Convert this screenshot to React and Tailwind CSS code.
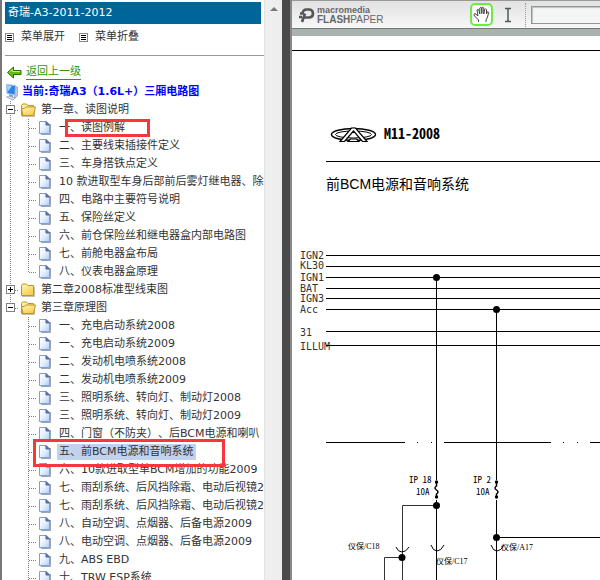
import React from 'react';

const UI = "font-['DejaVu_Sans','Noto_Sans_CJK_SC',sans-serif]";

const chapters = [
  {
    title: '第一章、读图说明',
    open: true,
    pages: [
      { text: '一、读图例解', mark: 'title' },
      { text: '二、主要线束插接件定义' },
      { text: '三、车身搭铁点定义' },
      { text: '10 款进取型车身后部前后雾灯继电器、除霜' },
      { text: '四、电路中主要符号说明' },
      { text: '五、保险丝定义' },
      { text: '六、前仓保险丝和继电器盒内部电路图' },
      { text: '七、前舱电器盒布局' },
      { text: '八、仪表电器盒原理' },
    ],
  },
  { title: '第二章2008标准型线束图', open: false, pages: [] },
  {
    title: '第三章原理图',
    open: true,
    last: true,
    pages: [
      { text: '一、充电启动系统2008' },
      { text: '一、充电启动系统2009' },
      { text: '二、发动机电喷系统2008' },
      { text: '二、发动机电喷系统2009' },
      { text: '三、照明系统、转向灯、制动灯2008' },
      { text: '三、照明系统、转向灯、制动灯2009' },
      { text: '四、门窗（不防夹）、后BCM电源和喇叭' },
      { text: '五、前BCM电源和音响系统', mark: 'row', selected: true },
      { text: '六、10款进取型单BCM增加的功能2009' },
      { text: '七、雨刮系统、后风挡除霜、电动后视镜2008' },
      { text: '七、雨刮系统、后风挡除霜、电动后视镜2009' },
      { text: '八、自动空调、点烟器、后备电源2009' },
      { text: '八、电动空调、点烟器、后备电源2009' },
      { text: '九、ABS EBD' },
      { text: '十、TRW ESP系统', more: true },
    ],
  },
];

function Defs() {
  return (
    <svg className="absolute h-0 w-0" aria-hidden="true">
      <defs>
        <linearGradient id="paper" x1="0" y1="0" x2="1" y2="1">
          <stop offset="0" stopColor="#fff" />
          <stop offset="0.5" stopColor="#e6f1ff" />
          <stop offset="1" stopColor="#a9cdfa" />
        </linearGradient>
        <linearGradient id="folder" x1="0" y1="0" x2="0.6" y2="1">
          <stop offset="0" stopColor="#fff6b5" />
          <stop offset="1" stopColor="#f6ce52" />
        </linearGradient>
      </defs>
    </svg>
  );
}

function ListIcon() {
  return (
    <svg width="9" height="9" viewBox="0 0 9 9" shapeRendering="crispEdges" aria-hidden="true">
      <path d="M.5 .5h8v8h-8z" fill="#fff" stroke="#888" />
      <path d="M2 2.500h5M2 4.500h5M2 6.500h5" stroke="#000" />
    </svg>
  );
}

function PageIcon() {
  return (
    <svg width="18" height="18" viewBox="0 0 18 18" aria-hidden="true">
      <path d="M4 15.500h9.500V5" fill="none" stroke="#9fa3b3" />
      <path d="M2.500 2.500h6.500l3.500 3.500v8.500h-10z" fill="url(#paper)" stroke="#7f9fd6" />
      <path d="M9 2.500v3.500h3.500z" fill="#6a82b8" stroke="#4d6298" />
    </svg>
  );
}

function FolderIcon({ open }) {
  return (
    <svg width="18" height="18" viewBox="0 0 18 18" aria-hidden="true">
      <path d="M3 15.500h12.500V6" fill="none" stroke="#c2bfb4" />
      <path d="M2.500 4.500l1-1.500h4l1.500 1.500h5.500v10h-12z" fill="url(#folder)" stroke="#bf9525" />
      {open && <path d="M2.500 7.500h3l1.500-1.500h9.500l-2 8.500h-10.500z" fill="url(#folder)" stroke="#bf9525" />}
    </svg>
  );
}

function ComputerIcon() {
  return (
    <svg width="16" height="18" viewBox="2 0 16 18" className="shrink-0" aria-hidden="true">
      <path d="M12 3l2.500 1v9l-3 2z" fill="#bfc9d6" stroke="#8c9bb0" strokeWidth=".7" />
      <path d="M3.500 1.500l9 1-.5 9.500-8-1.500z" fill="#2d83e5" stroke="#9fc4ed" />
      <path d="M4 2l5 1-4.500 6z" fill="#9bd3ff" />
      <path d="M6 11.500l4 .8v2l-4-.8z" fill="#8d9db3" />
      <path d="M3.500 14l3-1 6 2-3 2z" fill="#d9e0e9" stroke="#8c9bb0" strokeWidth=".7" />
    </svg>
  );
}

function BackIcon() {
  return (
    <svg width="16" height="14" viewBox="0 0 16 14" aria-hidden="true">
      <path d="M1.500 7.500l6-5.500v3.500h7.500v4H7.500V13z" fill="#62bd12" stroke="#22720b" strokeLinejoin="round" />
      <path d="M3.500 7l3-2.500v2H14" fill="none" stroke="#c8ef72" />
    </svg>
  );
}

function Guide({ x, last }) {
  return (
    <path
      d={`M${x}.5 0V${last ? 9 : 18}M${x}.5 9.500H16`}
      stroke="#808080"
      strokeDasharray="1 1"
      fill="none"
    />
  );
}

function PageRow({ page, trunk, last }) {
  return (
    <li className="flex h-[18px] items-center whitespace-nowrap">
      <svg width="18" height="18" className="shrink-0" shapeRendering="crispEdges" aria-hidden="true">
        {trunk && <path d="M5.500 0V18" stroke="#808080" strokeDasharray="1 1" />}
      </svg>
      <svg width="14" height="18" className="shrink-0" shapeRendering="crispEdges" aria-hidden="true">
        <Guide x={5} last={last} />
      </svg>
      <span className="relative flex shrink-0 items-center">
        <PageIcon />
        {page.mark === 'row' && (
          <span className="pointer-events-none absolute -top-1 -left-1 z-10 h-7 w-48 border-3 border-[#f8363c]" />
        )}
      </span>
      <a
        href="#page"
        className={`relative ml-0.5 px-0.5 leading-4 ${page.selected ? 'bg-[#c1d2ee]' : ''}`}
      >
        {page.text}
        {page.mark === 'title' && (
          <span className="pointer-events-none absolute -top-px left-2 h-[18px] w-[85px] border-3 border-[#f8363c]" />
        )}
      </a>
    </li>
  );
}

function Chapter({ chapter }) {
  return (
    <li>
      <div className="flex h-[18px] items-center whitespace-nowrap">
        <button type="button" className="shrink-0" aria-expanded={chapter.open} aria-label={chapter.title}>
          <svg width="14" height="18" className="block" shapeRendering="crispEdges" aria-hidden="true">
            <Guide x={5} last={chapter.last} />
            <path d="M1.500 4.500h8v8h-8z" fill="#fff" stroke="#808080" />
            <path d={chapter.open ? 'M3 8.500h5' : 'M3 8.500h5M5.500 6v5'} stroke="#000" />
          </svg>
        </button>
        <FolderIcon open={chapter.open} />
        <a href="#chapter" className="ml-0.5 px-0.5 leading-4">{chapter.title}</a>
      </div>
      {chapter.open && (
        <ul>
          {chapter.pages.map((page, i) => (
            <PageRow
              key={page.text}
              page={page}
              trunk={!chapter.last}
              last={i === chapter.pages.length - 1 && !page.more}
            />
          ))}
        </ul>
      )}
    </li>
  );
}

function Sidebar() {
  return (
    <nav className="min-w-0 flex-1 overflow-hidden bg-white text-[11px] text-[#333] [text-spacing-trim:space-all]">
      <h1 className="mt-0.5 mr-[3px] h-[22px] bg-[#006699] pl-[3px] text-[11px] leading-[22px] text-white">
        奇瑞-A3-2011-2012
      </h1>
      <div className="flex h-8 items-center gap-3.5 border-b border-[#999] pb-1">
        <button type="button" className="flex items-center gap-[7px]"><ListIcon />菜单展开</button>
        <button type="button" className="flex items-center gap-[7px]"><ListIcon />菜单折叠</button>
      </div>
      <div className="mt-2 flex h-4 items-center gap-1 pl-px">
        <BackIcon />
        <a href="#up" className="border-b border-[#339900] leading-[14px] text-[#339900]">返回上一级</a>
      </div>
      <div className="mt-[3px] flex h-[18px] items-center gap-px whitespace-nowrap font-bold text-[#0000ff]">
        <ComputerIcon />
        <span>当前:奇瑞A3（1.6L+）三厢电路图</span>
      </div>
      <ul>
        {chapters.map((c) => <Chapter key={c.title} chapter={c} />)}
      </ul>
    </nav>
  );
}

function FlashPaperLogo() {
  return (
    <div className="flex shrink-0 items-center gap-[2px] text-[#666]">
      <svg width="16" height="16" viewBox="0 0 16 16" aria-hidden="true">
        <path
          d="M3 15l3-8.500M5 10.500h5.500q3.500-.5 3.500-4t-3.500-4H7.500Q4 2.500 3.500 6.500H1M0 10h3"
          fill="none"
          stroke="#555"
          strokeWidth="2.600"
        />
      </svg>
      <div className="font-['Liberation_Sans',sans-serif]">
        <div className="text-[9px] leading-[9px] font-bold">macromedia</div>
        <div className="text-[10px] leading-[9px]"><b>FLASH</b>PAPER</div>
      </div>
    </div>
  );
}

function Toolbar() {
  return (
    <header className="flex h-[29px] shrink-0 items-center border-t border-b border-t-[#999] border-b-[#737878] bg-linear-to-b from-[#e2e2e2] to-[#f7f7f7] pl-[7px]">
      <FlashPaperLogo />
      <div className="ml-[86px] flex shrink-0 items-center gap-[5px]">
        <button type="button" aria-label="Hand" className="flex h-[23px] w-[23px] items-center justify-center rounded-[5px] border-2 border-[#6eea42] bg-white">
          <svg width="17" height="17" viewBox="0 0 17 17" aria-hidden="true">
            <path
              d="M5.500 16v-2L1.500 10Q0 8 2 7.500l3 2.500-1-6q.8-1.500 1.800 0l1 4V2q1-1.500 2 0v5.500V2q1-1.500 2 0V8l.7-4.500q1.200-1.200 2 0V8l.7-2q1.200-.8 1.500.5L14.500 11l-1.500 3v2"
              fill="#fff"
              stroke="#444"
            />
          </svg>
        </button>
        <button type="button" aria-label="Select text" className="flex h-[22px] w-5 items-center justify-center">
          <svg width="8" height="16" viewBox="0 0 8 16" aria-hidden="true">
            <path d="M1 1.500h2.500l.5 1 .5-1H7M4 2v12M1 14.500h2.500l.5-1 .5 1H7" fill="none" stroke="#50595c" strokeWidth="1.500" />
          </svg>
        </button>
      </div>
      <span className="ml-[7px] h-6 shrink-0 border-l border-dotted border-[#999]" />
      <input type="text" aria-label="Search" className="ml-[5px] h-[18px] w-full min-w-0 border border-r-0 border-[#8d9898] bg-[#f5f5f5] shadow-[inset_1px_1px_1px_#bbc2c2]" />
    </header>
  );
}

const rails = [
  ['IGN2', 259, 255],
  ['KL30', 269, 266],
  ['IGN1', 281, 277],
  ['BAT', 292, 288],
  ['IGN3', 302, 298],
  ['Acc', 313, 309],
  ['31', 336, 331],
  ['ILLUM', 350, 345],
];

function Fuse({ x }) {
  return (
    <g>
      <path d={`M${x} 480V500`} stroke="#fff" strokeWidth="3" />
      <path d={`M${x} 481v5q-3 2 0 4t0 4v4`} fill="none" stroke="#000" strokeWidth="1.500" />
      <circle cx={x} cy="482" r="1.700" />
      <circle cx={x} cy="497" r="1.700" />
    </g>
  );
}

function Diagram() {
  return (
    <svg width="1000" height="544" viewBox="292 36 1000 544" className="block shrink-0" fill="#000" role="img" aria-label="M11-2008">
      <path d="M292 50.500H1292" stroke="#000" />
      <g fill="none" stroke="#000">
        <ellipse cx="353.500" cy="134.500" rx="22" ry="6" strokeWidth="1.400" />
        <ellipse cx="353.500" cy="134.500" rx="18" ry="3.500" strokeWidth="1" />
        <path d="M340 141.500L351.500 128h4L367 141.500h-4.500l-9-10.500-9 10.500zM348 141.500l2.500-2.500h6l2.500 2.500z" fill="#fff" strokeWidth="1.200" />
      </g>
      <text x="384" y="139" className="font-['Noto_Sans_Mono_CJK_SC','Liberation_Sans',sans-serif] text-[14px] font-bold">M11-2008</text>
      <path d="M326 161.500H1292" stroke="#000" />
      <text x="326" y="189" className="font-['Liberation_Sans','Noto_Sans_CJK_SC',sans-serif] text-[14px]">前BCM电源和音响系统</text>

      {rails.map(([name, baseline, y]) => (
        <g key={name}>
          <text x="300" y={baseline} fill="#333" className="font-['DejaVu_Sans_Mono',monospace] text-[10px]">{name}</text>
          <path d={`M326 ${y}.5H1292`} stroke="#000" />
        </g>
      ))}

      <g fill="none" stroke="#000">
        <path d="M436.500 277V580M496.500 309V580M496.500 537.500H1292" />
        <path d="M326 442.500H405M417 442.500h1M431 442.500h1M444 442.500H551M563 442.500h1M577 442.500h1M590 442.500H697" />
        <path d="M436 505.500H402.500V580M402 557.500H384.500V580" stroke="#333" />
        <path d="M396 547q2 5 6 5t7-5M431 545q2 6 6 6t7-6M491 545q2 6 6 6t7-6" />
      </g>
      <Fuse x={436.5} />
      <Fuse x={496.5} />
      <circle cx="436.500" cy="277.500" r="3.500" />
      <circle cx="496.500" cy="309.500" r="3.500" />
      <circle cx="436.500" cy="505.500" r="3.500" />
      <circle cx="402" cy="557.500" r="3.500" />
      <circle cx="496.500" cy="537.500" r="3.500" />

      <g className="font-['Noto_Sans_Mono_CJK_SC','Liberation_Sans',sans-serif] text-[9px]">
        <text x="409" y="483">IP 18</text>
        <text x="416" y="495">10A</text>
        <text x="473" y="483">IP 2</text>
        <text x="476" y="495">10A</text>
      </g>
      <g className="font-['Liberation_Serif','Noto_Sans_CJK_SC',serif] text-[8px]">
        <text x="348" y="549">仪保/C18</text>
        <text x="436" y="564">仪保/C17</text>
        <text x="501" y="550">仪保/A17</text>
      </g>
    </svg>
  );
}

export default function App() {
  return (
    <div className={`flex h-screen overflow-hidden bg-white ${UI}`}>
      <Defs />
      <aside className="flex w-[282px] shrink-0 border-l-2 border-[#777] pl-[3px]">
        <Sidebar />
        <div className="flex w-[18px] shrink-0 justify-center border-l border-[#e3e3e3] bg-[#eeeeee] pt-[7px]">
          <svg width="8" height="4" viewBox="0 0 8 4" aria-hidden="true"><path d="M0 4l4-4 4 4z" fill="#777" /></svg>
        </div>
      </aside>
      <div className="w-2.5 shrink-0 border-r-2 border-[#888] bg-[#4a4a4a]" />
      <main className="flex min-w-0 flex-1 flex-col overflow-hidden">
        <Toolbar />
        <div className="h-[7px] shrink-0 bg-[#a9b1b1]" />
        <Diagram />
      </main>
    </div>
  );
}
